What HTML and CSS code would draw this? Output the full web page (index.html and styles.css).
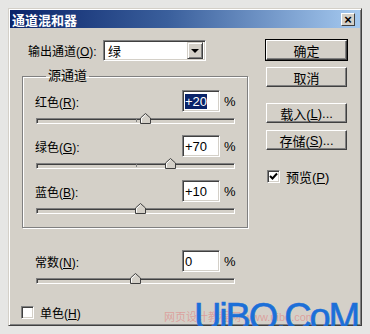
FILE: index.html
```
<!DOCTYPE html>
<html lang="zh">
<head>
    <meta charset="UTF-8">
    <title>通道混和器</title>
    <link rel="stylesheet" href="styles.css">
</head>
<body>
    <div class="dialog">
        <div class="titlebar">
            <span>通道混和器</span>
            <span class="close">×</span>
        </div>
        <div class="main">
            <div class="left">
                <div class="output-row">
                    <span class="output-label">输出通道(<u>O</u>):</span>
                    <div class="select">
                        <span class="select-text">绿</span>
                        <span class="drop"><i class="arrow"></i></span>
                    </div>
                </div>
                <fieldset class="group">
                    <legend>源通道</legend>
                    <div class="chan">
                        <span class="chan-label">红色(<u>R</u>):</span>
                        <div class="num"><span class="sel">+20</span></div>
                        <span class="pct">%</span>
                    </div>
                    <div class="slider">
                        <div class="track"></div>
                        <svg class="thumb" style="left: 104px" width="11" height="11" viewBox="0 0 11 11"><polygon points="0.5,10.5 0.5,5 5.5,0.5 10.5,5 10.5,10.5" fill="#d4d0c8" stroke="#404040"/><polyline points="1.5,9.5 1.5,5.4 5.5,1.8" fill="none" stroke="#fff"/></svg>
                    </div>
                    <div class="chan">
                        <span class="chan-label">绿色(<u>G</u>):</span>
                        <div class="num">+70</div>
                        <span class="pct">%</span>
                    </div>
                    <div class="slider">
                        <div class="track"></div>
                        <svg class="thumb" style="left: 129px" width="11" height="11" viewBox="0 0 11 11"><polygon points="0.5,10.5 0.5,5 5.5,0.5 10.5,5 10.5,10.5" fill="#d4d0c8" stroke="#404040"/><polyline points="1.5,9.5 1.5,5.4 5.5,1.8" fill="none" stroke="#fff"/></svg>
                    </div>
                    <div class="chan">
                        <span class="chan-label">蓝色(<u>B</u>):</span>
                        <div class="num">+10</div>
                        <span class="pct">%</span>
                    </div>
                    <div class="slider">
                        <div class="track"></div>
                        <svg class="thumb" style="left: 99px" width="11" height="11" viewBox="0 0 11 11"><polygon points="0.5,10.5 0.5,5 5.5,0.5 10.5,5 10.5,10.5" fill="#d4d0c8" stroke="#404040"/><polyline points="1.5,9.5 1.5,5.4 5.5,1.8" fill="none" stroke="#fff"/></svg>
                    </div>
                </fieldset>
                <div class="constant">
                    <div class="chan">
                        <span class="chan-label">常数(<u>N</u>):</span>
                        <div class="num">0</div>
                        <span class="pct">%</span>
                    </div>
                    <div class="slider">
                        <div class="track"></div>
                        <svg class="thumb" style="left: 94px" width="11" height="11" viewBox="0 0 11 11"><polygon points="0.5,10.5 0.5,5 5.5,0.5 10.5,5 10.5,10.5" fill="#d4d0c8" stroke="#404040"/><polyline points="1.5,9.5 1.5,5.4 5.5,1.8" fill="none" stroke="#fff"/></svg>
                    </div>
                </div>
                <div class="check-row mono">
                    <span class="checkbox"></span>
                    <span>单色(<u>H</u>)</span>
                </div>
            </div>
            <div class="right">
                <div class="btn default">确定</div>
                <div class="btn">取消</div>
                <div class="btn space">载入(<u>L</u>)...</div>
                <div class="btn">存储(<u>S</u>)...</div>
                <div class="check-row preview">
                    <span class="checkbox">
                        <svg width="9" height="9" viewBox="0 0 9 9"><polyline points="1,4 3.5,6.5 8,1.5" fill="none" stroke="#000" stroke-width="2"/></svg>
                    </span>
                    <span>预览(<u>P</u>)</span>
                </div>
            </div>
        </div>
        <div class="mark-cn">网页设计教程网 www.uibq.com</div>
        <div class="mark">UiBQ.CoM</div>
    </div>
</body>
</html>
```
FILE: styles.css
```
body {
    margin: 0;
    background-color: #e6e6e4;
    font: 12px "Liberation Sans", "Noto Sans CJK SC", sans-serif;
    color: #000;
}
u {
    text-decoration: underline;
    text-underline-offset: 1px;
}
.dialog {
    position: relative;
    margin: 8px 0 0 8px;
    width: 354px;
    height: 318px;
    box-sizing: border-box;
    padding: 1px;
    background-color: #d4d0c8;
    border: 1px solid;
    border-color: #d4d0c8 #404040 #404040 #d4d0c8;
    box-shadow: inset 1px 1px #fff, inset -1px -1px #808080;
}
.titlebar {
    height: 18px;
    display: flex;
    align-items: center;
    justify-content: space-between;
    padding: 0 5px 0 2px;
    background: linear-gradient(to right, #0a246a, #3a5f9c 45%, #a6caf0);
    color: #fff;
    font-size: 13px;
    font-weight: bold;
}
.close {
    width: 12px;
    height: 11px;
    display: flex;
    align-items: center;
    justify-content: center;
    background-color: #d4d0c8;
    border: 1px solid;
    border-color: #fff #404040 #404040 #fff;
    color: #000;
    font-size: 13px;
    line-height: 1;
}
.main {
    display: flex;
    padding-top: 12px;
}
.left {
    margin-left: 12px;
    width: 226px;
}
.right {
    margin-left: 18px;
    width: 81px;
    display: flex;
    flex-direction: column;
    gap: 7px;
}
.output-row {
    display: flex;
    align-items: center;
    height: 21px;
    padding-left: 6px;
}
.output-label {
    width: 75px;
}
.select {
    width: 103px;
    height: 21px;
    box-sizing: border-box;
    display: flex;
    align-items: center;
    justify-content: space-between;
    padding: 0 2px 0 4px;
    background-color: #fff;
    border: 1px solid;
    border-color: #808080 #fff #fff #808080;
    box-shadow: inset 1px 1px #404040, inset -1px -1px #d4d0c8;
}
.select-text {
    font-size: 13px;
}
.drop {
    width: 14px;
    height: 15px;
    display: flex;
    align-items: center;
    justify-content: center;
    background-color: #d4d0c8;
    border: 1px solid;
    border-color: #d4d0c8 #404040 #404040 #d4d0c8;
    box-shadow: inset 1px 1px #fff, inset -1px -1px #808080;
}
.arrow {
    width: 0;
    height: 0;
    border-left: 4px solid transparent;
    border-right: 4px solid transparent;
    border-top: 4px solid #000;
}
.group {
    margin: 8px 0 0 0;
    padding: 7px 12px 13px 12px;
    border: 1px solid #808080;
    box-shadow: 1px 1px #fff, inset 1px 1px #fff;
    min-width: 0;
}
.group legend {
    margin-left: 11px;
    padding: 0 2px;
    line-height: 14px;
    font-size: 13px;
}
.chan {
    display: flex;
    align-items: center;
    height: 22px;
}
.chan + .slider + .chan {
    margin-top: 11px;
}
.chan-label {
    flex: 1;
}
.num {
    width: 38px;
    height: 22px;
    box-sizing: border-box;
    padding: 2px 0 0 2px;
    background-color: #fff;
    border: 1px solid;
    border-color: #808080 #fff #fff #808080;
    box-shadow: inset 1px 1px #404040, inset -1px -1px #d4d0c8;
    font-size: 13px;
    line-height: 17px;
}
.sel {
    background-color: #0a246a;
    color: #fff;
}
.pct {
    width: 11px;
    margin-left: 4px;
    font-size: 13px;
}
.slider {
    position: relative;
    margin: 1px 0 0 1px;
    width: 199px;
    height: 11px;
}
.track {
    position: absolute;
    left: 0;
    right: 0;
    bottom: 0;
    height: 6px;
    box-sizing: border-box;
    border: 1px solid;
    border-color: #808080 #fff #fff #808080;
    box-shadow: inset 1px 1px #404040;
    background-color: #d4d0c8;
}
.track::after {
    content: "";
    position: absolute;
    left: 99px;
    top: 0;
    width: 1px;
    height: 3px;
    background-color: #808080;
}
.thumb {
    position: absolute;
    top: 0;
}
.constant {
    margin: 22px 0 0 13px;
    width: 200px;
}
.check-row {
    display: flex;
    align-items: center;
    gap: 6px;
}
.mono {
    margin: 20px 0 0 -1px;
}
.checkbox {
    width: 13px;
    height: 13px;
    box-sizing: border-box;
    display: flex;
    align-items: center;
    justify-content: center;
    background-color: #fff;
    border: 1px solid;
    border-color: #808080 #fff #fff #808080;
    box-shadow: inset 1px 1px #404040, inset -1px -1px #d4d0c8;
}
.btn {
    height: 20px;
    box-sizing: border-box;
    display: flex;
    align-items: center;
    justify-content: center;
    background-color: #d4d0c8;
    border: 1px solid;
    border-color: #fff #404040 #404040 #fff;
    box-shadow: inset -1px -1px #808080;
    font-size: 13px;
}
.btn.default {
    outline: 1px solid #000;
}
.btn.space {
    margin-top: 9px;
}
.preview {
    margin: 10px 0 0 1px;
    font-size: 13px;
}
.mark-cn {
    position: absolute;
    left: 155px;
    top: 299px;
    font-size: 11px;
    color: rgba(226, 120, 120, 0.55);
    white-space: nowrap;
}
.mark {
    position: absolute;
    left: 185px;
    top: 293px;
    font-family: "Liberation Sans", sans-serif;
    font-size: 38px;
    line-height: 30px;
    letter-spacing: -2.2px;
    color: #1c6fd8;
    -webkit-text-stroke: 0.6px #1c6fd8;
    white-space: nowrap;
}
```
